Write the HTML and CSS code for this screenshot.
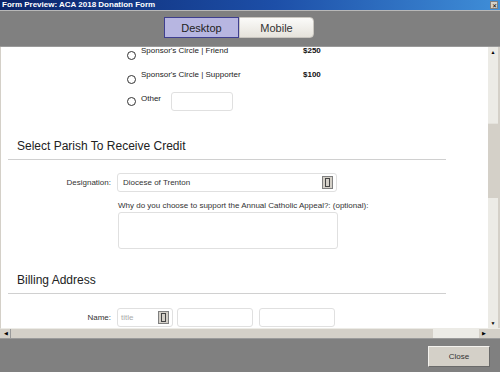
FILE: index.html
```html
<!DOCTYPE html>
<html lang="en">
<head>
    <meta charset="UTF-8">
    <title>Form Preview: ACA 2018 Donation Form</title>
    <link rel="stylesheet" href="styles.css">
</head>
<body>

<div class="window">

    <div class="titlebar">
        <span class="title">Form Preview: ACA 2018 Donation Form</span>
        <span class="close-x">&#x2715;</span>
    </div>

    <!-- Desktop / Mobile switch -->
    <div class="toolbar">
        <div class="tab tab-active">Desktop</div>
        <div class="tab">Mobile</div>
    </div>

    <div class="main">
        <div class="viewport">
            <div class="page">

                <!-- Donation levels -->
                <div class="opt">
                    <span class="radio"></span>
                    <span class="opt-label">Sponsor's Circle | Friend</span>
                    <span class="price">$250</span>
                </div>
                <div class="opt">
                    <span class="radio"></span>
                    <span class="opt-label">Sponsor's Circle | Supporter</span>
                    <span class="price">$100</span>
                </div>
                <div class="opt opt-other">
                    <span class="radio"></span>
                    <span class="other-label">Other</span>
                    <span class="field field-other"></span>
                </div>

                <div class="section">
                    <h2>Select Parish To Receive Credit</h2>
                </div>

                <div class="row">
                    <label class="row-label">Designation:</label>
                    <div class="field field-select">
                        <span>Diocese of Trenton</span>
                        <span class="drop"><i></i></span>
                    </div>
                </div>

                <div class="question">Why do you choose to support the Annual Catholic Appeal?: (optional):</div>
                <div class="field field-area"></div>

                <div class="section section-billing">
                    <h2>Billing Address</h2>
                </div>

                <div class="row row-name">
                    <label class="row-label">Name:</label>
                    <div class="field field-title">
                        <span class="placeholder">title</span>
                        <span class="drop"><i></i></span>
                    </div>
                    <div class="field field-first"></div>
                    <div class="field field-last"></div>
                </div>

            </div>
        </div>

        <div class="vscroll">
            <div class="sb-btn">&#9650;</div>
            <div class="sb-track">
                <div class="sb-thumb"></div>
            </div>
            <div class="sb-btn">&#9660;</div>
        </div>
    </div>

    <div class="hscroll">
        <div class="sb-btn">&#9664;</div>
        <div class="h-thumb"></div>
        <div class="h-track"></div>
        <div class="sb-btn">&#9654;</div>
        <div class="corner"></div>
    </div>

    <div class="footer">
        <button type="button" class="close-btn">Close</button>
    </div>

</div>

</body>
</html>
```

FILE: styles.css
```css
body {
    margin: 0;
    padding: 0;
    font-family: "Liberation Sans", Arial, sans-serif;
    background-color: #808080;
}

.window {
    width: 500px;
    height: 372px;
    display: flex;
    flex-direction: column;
    background-color: #808080;
    overflow: hidden;
}

/* title bar */
.titlebar {
    height: 10px;
    display: flex;
    align-items: center;
    justify-content: space-between;
    padding: 0 2px 0 2px;
    background: linear-gradient(to right, #0a246a, #1d4fa8 55%, #3f8ed8);
    border-bottom: 1px solid #b8b8b8;
}

.title {
    color: #fff;
    font-weight: bold;
    font-size: 8px;
    line-height: 10px;
}

.close-x {
    width: 8px;
    height: 8px;
    font-size: 6px;
    line-height: 8px;
    text-align: center;
    color: #000;
    background-color: #d4d0c8;
    border: 1px solid #808080;
    box-sizing: border-box;
}

/* toolbar with tabs */
.toolbar {
    height: 36px;
    display: flex;
    align-items: flex-start;
    padding-left: 164px;
    box-sizing: border-box;
    padding-top: 6px;
    border-bottom: 1px solid #9a9a9a;
}

.tab {
    width: 75px;
    height: 21px;
    line-height: 21px;
    text-align: center;
    font-size: 11px;
    color: #333;
    box-sizing: border-box;
    background: linear-gradient(#fbfbf9, #e6e3dc);
    border: 1px solid #c9c6c0;
    border-radius: 0 4px 4px 0;
}

.tab-active {
    background: #b7b6e1;
    border: 1px solid #3f3f8f;
    border-radius: 0;
    color: #222;
}

/* main area */
.main {
    height: 281px;
    display: flex;
    border-left: 1px solid #d4d0c8;
}

.viewport {
    flex: 1;
    background-color: #fff;
    overflow: hidden;
}

.page {
    margin-top: -4px;
    color: #222;
    font-size: 8px;
}

.opt {
    height: 24px;
    display: flex;
    align-items: flex-start;
    padding-left: 126px;
}

.radio {
    width: 9px;
    height: 9px;
    margin-top: 8px;
    border: 1px solid #333;
    border-radius: 50%;
    box-sizing: border-box;
}

.opt-label {
    width: 162px;
    margin: 4px 0 0 5px;
    line-height: 8px;
    color: #222;
}

.price {
    font-weight: bold;
    color: #111;
    line-height: 8px;
    margin-top: 4px;
}

.opt-other {
    height: 26px;
    margin-top: 1px;
}

.opt-other .radio {
    margin-top: 5px;
}

.other-label {
    margin-left: 5px;
    margin-top: 2px;
    width: 30px;
    line-height: 10px;
}

.field {
    border: 1px solid #e0e0e0;
    border-radius: 3px;
    box-sizing: border-box;
    background-color: #fff;
    height: 19px;
}

.field-other {
    width: 62px;
}

/* section headings */
.section {
    margin: 20px 42px 0 7px;
    border-bottom: 1px solid #d0d0d0;
    padding: 0 0 4px 9px;
}

.section h2 {
    margin: 0;
    font-size: 12px;
    font-weight: normal;
    color: #222;
    line-height: 17px;
}

.section-billing {
    margin-top: 23px;
}

.row {
    display: flex;
    align-items: center;
    margin-top: 13px;
}

.row-label {
    width: 116px;
    text-align: right;
    padding-right: 6px;
    box-sizing: border-box;
    color: #333;
}

.field-select {
    width: 220px;
    display: flex;
    align-items: center;
    justify-content: space-between;
    padding: 0 3px 0 5px;
    color: #333;
}

.drop {
    width: 11px;
    height: 13px;
    background-color: #d4d0c8;
    border: 1px solid #808080;
    box-sizing: border-box;
    display: flex;
    align-items: center;
    justify-content: center;
}

.drop i {
    width: 3px;
    height: 7px;
    border: 1px solid #444;
}

.question {
    margin: 9px 0 0 117px;
    color: #333;
    line-height: 10px;
}

.field-area {
    margin: 1px 0 0 117px;
    width: 220px;
    height: 37px;
}

.row-name {
    margin-top: 14px;
}

.field-title {
    width: 56px;
    display: flex;
    align-items: center;
    justify-content: space-between;
    padding: 0 3px 0 3px;
}

.placeholder {
    color: #aaa;
}

.field-first {
    width: 76px;
    margin-left: 4px;
}

.field-last {
    width: 76px;
    margin-left: 6px;
}

/* scrollbars */
.vscroll {
    width: 10px;
    display: flex;
    flex-direction: column;
    background-color: #ecebe6;
    border-right: 2px solid #d4d0c8;
}

.sb-btn {
    width: 10px;
    height: 10px;
    font-size: 5px;
    line-height: 10px;
    text-align: center;
    color: #000;
    background-color: #ecebe6;
    box-sizing: border-box;
}

.sb-track {
    flex: 1;
    padding-top: 66px;
}

.sb-thumb {
    height: 74px;
    background-color: #d4d0c8;
    border-top: 1px solid #e4e2dc;
}

.hscroll {
    height: 9px;
    display: flex;
    background-color: #d4d0c8;
    border-top: 1px solid #ecebe6;
    border-left: 1px solid #d4d0c8;
}

.hscroll .sb-btn {
    width: 9px;
    height: 9px;
    line-height: 9px;
    background-color: #d4d0c8;
}

.h-thumb {
    width: 422px;
    border-left: 1px solid #9a9a9a;
    background-color: #d4d0c8;
}

.h-track {
    flex: 1;
    background-color: #ecebe6;
}

.corner {
    width: 12px;
    background-color: #d4d0c8;
}

/* footer */
.footer {
    flex: 1;
    display: flex;
    justify-content: flex-end;
    align-items: flex-start;
    padding: 7px 10px 0 0;
    border-top: 1px solid #9a9a9a;
}

.close-btn {
    width: 62px;
    height: 21px;
    font-family: "Liberation Sans", Arial, sans-serif;
    font-size: 8px;
    color: #333;
    background-color: #d4d0c8;
    border: 1px solid;
    border-color: #f4f2ee #6a6a6a #6a6a6a #f4f2ee;
    padding: 0;
}
```
